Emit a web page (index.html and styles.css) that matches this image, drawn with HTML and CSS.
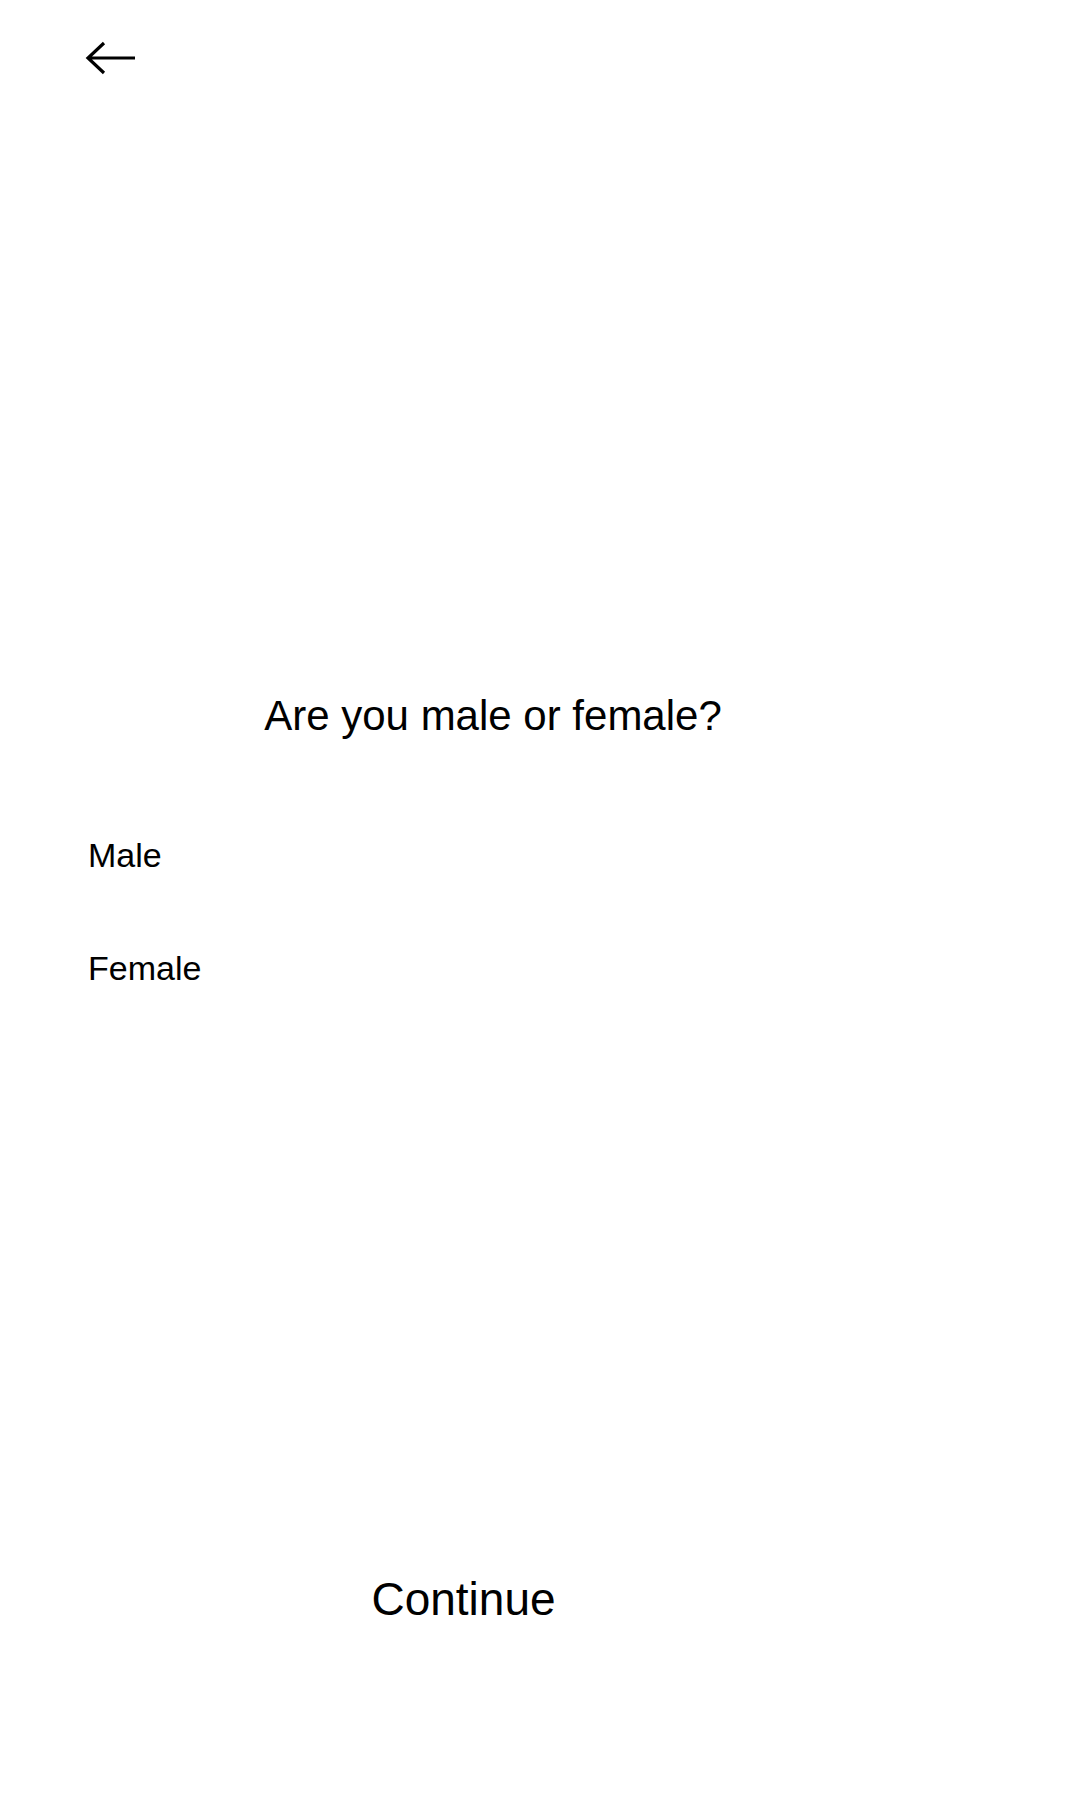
FILE: index.html
```html
<!DOCTYPE html>
<html lang="en">
<head>
<meta charset="utf-8">
<title>Gender</title>
<link rel="stylesheet" href="styles.css">
</head>
<body>
<div class="screen">
  <header class="top">
    <button class="back" aria-label="Back">
      <svg width="54" height="38" viewBox="0 0 54 38" fill="none" stroke="#000" stroke-width="3.2" stroke-linejoin="miter" stroke-linecap="butt">
        <path d="M20 3 L4 18 L20 33 M4 18 H51"/>
      </svg>
    </button>
  </header>
  <h1 class="question">Are you male or female?</h1>
  <ul class="options">
    <li class="option">Male</li>
    <li class="option">Female</li>
  </ul>
  <div class="action">Continue</div>
</div>
</body>
</html>
```
FILE: styles.css
```css
html, body {
  margin: 0;
  padding: 0;
  background: #ffffff;
}
body {
  font-family: "Liberation Sans", Arial, sans-serif;
  color: #000;
}
.screen {
  width: 1080px;
  height: 1800px;
  display: flex;
  flex-direction: column;
}
.top {
  padding: 40px 0 0 84px;
  height: 78px;
  box-sizing: border-box;
}
.back {
  display: block;
  background: none;
  border: 0;
  padding: 0;
  margin: 0;
  cursor: pointer;
}
.back svg {
  display: block;
}
.question {
  margin: 614px 0 0 0;
  padding: 0 94px 0 0;
  font-size: 42px;
  line-height: 48px;
  font-weight: 400;
  text-align: center;
}
.options {
  list-style: none;
  margin: 96px 0 0 0;
  padding: 0 0 0 88px;
  display: flex;
  flex-direction: column;
  gap: 73.5px;
}
.option {
  font-size: 34px;
  line-height: 39px;
}
.action {
  margin-top: 585px;
  padding-right: 153px;
  text-align: center;
  font-size: 46px;
  line-height: 53px;
}
```
